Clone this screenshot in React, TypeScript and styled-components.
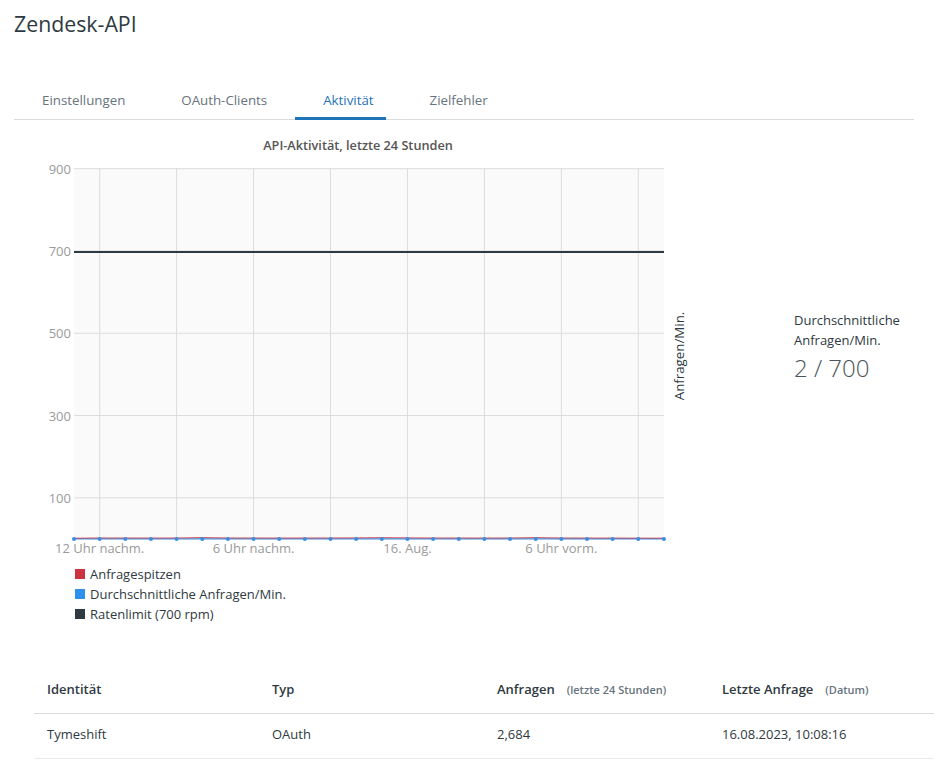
import React from "react";
import styled, { createGlobalStyle } from "styled-components";

const Global = createGlobalStyle`
  html, body { margin: 0; padding: 0; background: #fff; }
  body { font-family: "Open Sans", "Noto Sans", sans-serif; color: #2f3941; }
  * { box-sizing: border-box; }
`;

const Page = styled.div`
  width: 938px;
  padding: 0 0 0 14px;
`;

const Title = styled.h1`
  margin: 0;
  padding-top: 9px;
  height: 62px;
  font-size: 21.3px;
  font-weight: 400;
  line-height: 30px;
  color: #2f3941;
`;

const TabList = styled.div`
  display: flex;
  gap: 16px;
  width: 900px;
  margin-top: 20px;
  border-bottom: 1px solid #d8dcde;
`;

const Tab = styled.div<{ $active?: boolean }>`
  padding: 7px 12px 6px 28px;
  font-size: 13.3px;
  line-height: 22px;
  color: ${(p) => (p.$active ? "#1f73b7" : "#68737d")};
  border-bottom: 3px solid ${(p) => (p.$active ? "#1f73b7" : "transparent")};
  margin-bottom: -1px;
`;

const ChartRow = styled.div`
  display: flex;
  align-items: flex-start;
  margin-top: 12px;
`;

const ChartColumn = styled.div`
  display: flex;
  flex-direction: column;
  width: 690px;
`;

const Legend = styled.ul`
  list-style: none;
  margin: 0 0 0 61px;
  padding: 0;
  display: flex;
  flex-direction: column;
`;

const LegendItem = styled.li`
  display: flex;
  align-items: center;
  gap: 5px;
  height: 20px;
  font-size: 13px;
  color: #2f3941;
`;

const Swatch = styled.span<{ $color: string }>`
  width: 10px;
  height: 10px;
  background: ${(p) => p.$color};
`;

const Stat = styled.div`
  margin: 178px 0 0 90px;
  display: flex;
  flex-direction: column;
`;

const StatLabel = styled.div`
  font-size: 13px;
  line-height: 20px;
  color: #2f3941;
  width: 120px;
`;

const StatValue = styled.div`
  font-size: 24px;
  font-weight: 300;
  line-height: 32px;
  color: #49545c;
  margin-top: 2px;
`;

const Table = styled.table`
  margin: 44px 0 0 34px;
  width: 900px;
  border-collapse: collapse;
  table-layout: fixed;
`;

const Th = styled.th`
  text-align: left;
  padding: 0 13px 2px;
  height: 45px;
  font-size: 13px;
  font-weight: 600;
  color: #2f3941;
  border-bottom: 1px solid #d8dcde;
`;

const Sub = styled.span`
  margin-left: 12px;
  font-size: 11px;
  font-weight: 600;
  color: #68737d;
`;

const Td = styled.td`
  padding: 0 13px 4px;
  height: 45px;
  font-size: 13px;
  color: #2f3941;
  border-bottom: 1px solid #e9ebed;
`;

const X0 = 74;
const STEP = 25.65;
const BASE = 539;
const yFor = (v: number) => BASE - (v / 200) * 82.3;

const peaks = [0, 0.6, 0.5, 0.4, 0.5, 1.6, 0.6, 0.5, 0.4, 0.5, 0.6, 0.8, 1.4, 0.8, 0.5, 0.5, 0.4, 0.6, 1.5, 0.6, 0.4, 0.3, 0.2, 0.1];
const avgs = peaks.map(() => 0.3);

const Chart: React.FC = () => {
  const xs = peaks.map((_, i) => X0 + i * STEP);
  const grid = [0, 1, 2, 3, 4, 5, 6, 7].map((k) => X0 + STEP + k * 3 * STEP);
  const yTicks = [900, 700, 500, 300, 100];
  const xLabels = [
    { i: 1, t: "12 Uhr nachm." },
    { i: 7, t: "6 Uhr nachm." },
    { i: 13, t: "16. Aug." },
    { i: 19, t: "6 Uhr vorm." },
  ];
  return (
    <svg width={690} height={432} viewBox="14 132 690 432" fontFamily='"Open Sans", sans-serif'>
      <text x={358} y={150} textAnchor="middle" fontSize={12.7} fontWeight={600} fill="#555">
        API-Aktivität, letzte 24 Stunden
      </text>
      <rect x={74} y={169} width={590} height={370} fill="#fafafa" />
      {yTicks.map((v) => (
        <g key={v}>
          <line x1={74} x2={664} y1={yFor(v)} y2={yFor(v)} stroke="#dcdcdc" strokeWidth={1} />
          <text x={71} y={yFor(v) + 5} textAnchor="end" fontSize={13} fill="#9a9a9a">
            {v}
          </text>
        </g>
      ))}
      {grid.map((x) => (
        <line key={x} x1={x} x2={x} y1={169} y2={539} stroke="#dcdcdc" strokeWidth={1} />
      ))}
      <line x1={74} x2={664} y1={252} y2={252} stroke="#2f3941" strokeWidth={2} />
      <polyline
        fill="none"
        stroke="#3a8de0"
        strokeWidth={1.2}
        points={xs.map((x, i) => `${x},${yFor(avgs[i])}`).join(" ")}
      />
      <polyline
        fill="none"
        stroke="#c72a3a"
        strokeWidth={1}
        opacity={0.8}
        points={xs.map((x, i) => `${x},${yFor(peaks[i]) - 0.8}`).join(" ")}
      />
      {xs.map((x, i) => (
        <circle key={i} cx={x} cy={yFor(avgs[i])} r={2} fill="#3a8de0" />
      ))}
      {xLabels.map((l) => (
        <text key={l.t} x={X0 + l.i * STEP} y={553} textAnchor="middle" fontSize={13} fill="#9a9a9a">
          {l.t}
        </text>
      ))}
      <text
        transform="translate(684 356) rotate(-90)"
        textAnchor="middle"
        fontSize={13.3}
        fill="#2f3941"
      >
        Anfragen/Min.
      </text>
    </svg>
  );
};

export default function App() {
  return (
    <>
      <Global />
      <Page>
        <Title>Zendesk-API</Title>
        <TabList>
          <Tab>Einstellungen</Tab>
          <Tab>OAuth-Clients</Tab>
          <Tab $active>Aktivität</Tab>
          <Tab>Zielfehler</Tab>
        </TabList>
        <ChartRow>
          <ChartColumn>
            <Chart />
            <Legend>
              <LegendItem>
                <Swatch $color="#cc3340" />
                Anfragespitzen
              </LegendItem>
              <LegendItem>
                <Swatch $color="#3091ec" />
                Durchschnittliche Anfragen/Min.
              </LegendItem>
              <LegendItem>
                <Swatch $color="#2f3941" />
                Ratenlimit (700 rpm)
              </LegendItem>
            </Legend>
          </ChartColumn>
          <Stat>
            <StatLabel>Durchschnittliche Anfragen/Min.</StatLabel>
            <StatValue>2 / 700</StatValue>
          </Stat>
        </ChartRow>
      </Page>
      <Table>
        <thead>
          <tr>
            <Th>Identität</Th>
            <Th>Typ</Th>
            <Th>
              Anfragen<Sub>(letzte 24 Stunden)</Sub>
            </Th>
            <Th>
              Letzte Anfrage<Sub>(Datum)</Sub>
            </Th>
          </tr>
        </thead>
        <tbody>
          <tr>
            <Td>Tymeshift</Td>
            <Td>OAuth</Td>
            <Td>2,684</Td>
            <Td>16.08.2023, 10:08:16</Td>
          </tr>
        </tbody>
      </Table>
    </>
  );
}
